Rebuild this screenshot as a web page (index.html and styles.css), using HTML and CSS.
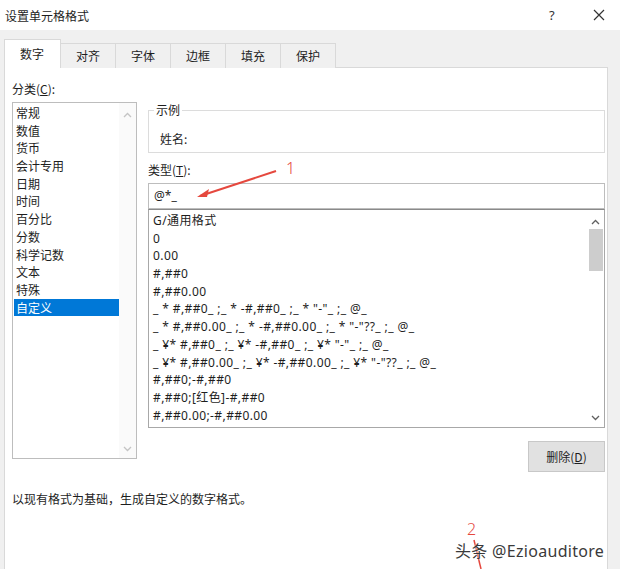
FILE: index.html
```html
<!DOCTYPE html>
<html lang="zh-CN">
<head>
    <meta charset="UTF-8">
    <title>设置单元格格式</title>
    <link rel="stylesheet" href="styles.css">
</head>
<body>

    <div class="titlebar">
        <span class="title">设置单元格格式</span>
        <span class="help">?</span>
        <span class="close">
            <svg width="12" height="12" viewBox="0 0 12 12"><path d="M1 1 L11 11 M11 1 L1 11" stroke="#333" stroke-width="1.2" fill="none"/></svg>
        </span>
    </div>

    <div class="dialog">
        <div class="tabs">
            <div class="tab active">数字</div>
            <div class="tab">对齐</div>
            <div class="tab">字体</div>
            <div class="tab">边框</div>
            <div class="tab">填充</div>
            <div class="tab">保护</div>
        </div>

        <div class="panel">
            <div class="label">分类(<u>C</u>):</div>
            <div class="cols">
                <div class="cat-list">
                    <ul class="items">
                        <li>常规</li>
                        <li>数值</li>
                        <li>货币</li>
                        <li>会计专用</li>
                        <li>日期</li>
                        <li>时间</li>
                        <li>百分比</li>
                        <li>分数</li>
                        <li>科学记数</li>
                        <li>文本</li>
                        <li>特殊</li>
                        <li class="selected">自定义</li>
                    </ul>
                    <div class="vscroll light">
                        <svg class="arrow" width="9" height="6" viewBox="0 0 9 6"><path d="M1 5 L4.5 1.5 L8 5" stroke="#c4c4c4" stroke-width="1.3" fill="none"/></svg>
                        <svg class="arrow" width="9" height="6" viewBox="0 0 9 6"><path d="M1 1 L4.5 4.5 L8 1" stroke="#c4c4c4" stroke-width="1.3" fill="none"/></svg>
                    </div>
                </div>

                <div class="right">
                    <fieldset class="sample">
                        <legend>示例</legend>
                        <div class="sample-text">姓名:</div>
                    </fieldset>

                    <div class="type-label">类型(<u>T</u>):</div>
                    <div class="type-input">@*_</div>

                    <div class="fmt-list">
                        <ul class="items fmt">
                            <li>G/通用格式</li>
                            <li>0</li>
                            <li>0.00</li>
                            <li>#,##0</li>
                            <li>#,##0.00</li>
                            <li>_ * #,##0_ ;_ * -#,##0_ ;_ * "-"_ ;_ @_</li>
                            <li>_ * #,##0.00_ ;_ * -#,##0.00_ ;_ * "-"??_ ;_ @_</li>
                            <li>_ ¥* #,##0_ ;_ ¥* -#,##0_ ;_ ¥* "-"_ ;_ @_</li>
                            <li>_ ¥* #,##0.00_ ;_ ¥* -#,##0.00_ ;_ ¥* "-"??_ ;_ @_</li>
                            <li>#,##0;-#,##0</li>
                            <li>#,##0;[红色]-#,##0</li>
                            <li>#,##0.00;-#,##0.00</li>
                        </ul>
                        <div class="vscroll">
                            <svg class="arrow" width="9" height="6" viewBox="0 0 9 6"><path d="M1 5 L4.5 1.5 L8 5" stroke="#606060" stroke-width="1.3" fill="none"/></svg>
                            <div class="thumb"></div>
                            <svg class="arrow" width="9" height="6" viewBox="0 0 9 6"><path d="M1 1 L4.5 4.5 L8 1" stroke="#606060" stroke-width="1.3" fill="none"/></svg>
                        </div>
                    </div>

                    <div class="btn-row">
                        <button class="del-btn">删除(<u>D</u>)</button>
                    </div>
                </div>
            </div>

            <p class="hint">以现有格式为基础，生成自定义的数字格式。</p>
        </div>
    </div>

    <!-- red annotations drawn over the screenshot -->
    <svg class="marks" width="620" height="569" viewBox="0 0 620 569">
        <path d="M276 171 L200 196" stroke="#e5483e" stroke-width="2" fill="none"/>
        <path d="M197 197 L209 189 L207 197 Z" fill="#e5483e"/>
        <path d="M474 540 L481 569" stroke="#e5483e" stroke-width="1.5" fill="none"/>
    </svg>
    <span class="num one">1</span>
    <span class="num two">2</span>
    <span class="watermark">头条 @Ezioauditore</span>

</body>
</html>
```

FILE: styles.css
```css
body {
    margin: 0;
    width: 620px;
    height: 569px;
    overflow: hidden;
    position: relative;
    background: #f0f0f0;
    font-family: "Microsoft YaHei UI", "Noto Sans", "Noto Sans CJK SC", sans-serif;
    font-size: 12px;
    color: #1e1e1e;
}

.titlebar {
    height: 30px;
    background: #fff;
    display: flex;
    align-items: center;
    padding: 0 0 0 5px;
}

.title {
    flex: 1;
    font-family: "Noto Sans CJK SC", sans-serif;
    font-size: 12px;
}

.help {
    width: 44px;
    font-size: 13px;
    color: #333;
}

.close {
    width: 27px;
    display: flex;
    align-items: center;
}

.dialog {
    padding: 10px 12px 0 4px;
}

.tabs {
    display: flex;
    align-items: flex-end;
    height: 28px;
    position: relative;
    z-index: 1;
}

.tab {
    height: 24px;
    line-height: 24px;
    padding: 0 15px 0 15px;
    border: 1px solid #d9d9d9;
    border-left: none;
    border-bottom: none;
    background: #f0f0f0;
    font-family: "Noto Sans CJK SC", sans-serif;
}

.tab.active {
    height: 28px;
    line-height: 27px;
    background: #fff;
    border-left: 1px solid #d9d9d9;
    padding: 0 16px 0 15px;
}

.panel {
    background: #fff;
    border: 1px solid #d9d9d9;
    margin-top: -1px;
    height: 490px;
    padding: 13px 2px 0 7px;
}

.label,
.type-label {
    height: 21px;
    line-height: 16px;
    font-family: "Noto Sans CJK SC", sans-serif;
}

.cols {
    display: grid;
    grid-template-columns: 125px 457px;
    gap: 11px;
}

.cat-list {
    height: 355px;
    border: 1px solid #bdbdbd;
    display: flex;
    font-family: "Noto Sans CJK SC", sans-serif;
}

.items {
    list-style: none;
    margin: 0;
    padding: 1px 0 0 1px;
    flex: 1;
}

.items li {
    height: 17.7px;
    line-height: 17.7px;
    padding-left: 2px;
    white-space: nowrap;
}

.items li.selected {
    background: #0078d7;
    color: #fff;
}

.vscroll {
    width: 17px;
    display: flex;
    flex-direction: column;
    align-items: center;
    justify-content: space-between;
    padding: 9px 0 6px;
}

.vscroll.light {
    background: #fafafa;
}

.thumb {
    width: 14px;
    height: 42px;
    background: #cdcdcd;
    margin-top: 4px;
    flex: 0 0 auto;
    margin-bottom: auto;
}

.vscroll .arrow {
    flex: 0 0 auto;
}

.sample {
    margin: 0;
    height: 51px;
    box-sizing: border-box;
    border: 1px solid #dcdcdc;
    padding: 0 0 0 11px;
}

.sample legend {
    padding: 0 2px;
    margin-left: -6px;
    line-height: 16px;
    font-family: "Noto Sans CJK SC", sans-serif;
}

.sample-text {
    margin-top: 12px;
    font-family: "Noto Sans CJK SC", sans-serif;
}

.type-label {
    margin-top: 9px;
    height: 21px;
}

.type-input {
    height: 24px;
    line-height: 24px;
    border: 1px solid #bdbdbd;
    padding-left: 5px;
}

.fmt-list {
    height: 217px;
    border: 1px solid #a8a8a8;
    border-top: 1px solid #8a8a8a;
    display: flex;
}

.fmt {
    padding-top: 2px;
    letter-spacing: 0.4px;
}

.fmt li {
    padding-left: 3px;
}

.btn-row {
    display: flex;
    justify-content: flex-end;
    margin-top: 13px;
}

.del-btn {
    width: 77px;
    height: 31px;
    background: #e1e1e1;
    border: 1px solid #c8c8c8;
    font-family: "Noto Sans CJK SC", sans-serif;
    font-size: 12px;
    color: #1e1e1e;
    padding: 0;
}

.hint {
    margin: 18px 0 0;
    font-family: "Noto Sans CJK SC", sans-serif;
}

.marks {
    position: absolute;
    left: 0;
    top: 0;
}

.num {
    position: absolute;
    color: #e5483e;
    font-family: "Noto Sans", sans-serif;
    font-size: 16px;
    font-weight: 300;
    line-height: 16px;
}

.one {
    left: 286px;
    top: 160px;
}

.two {
    left: 467px;
    top: 521px;
}

.watermark {
    position: absolute;
    left: 455px;
    top: 538px;
    font-family: "Noto Sans", "Noto Sans CJK SC", sans-serif;
    font-size: 16px;
    letter-spacing: 0.3px;
    color: #3a3a3a;
    text-shadow: 0 0 2px #fff;
}
```
